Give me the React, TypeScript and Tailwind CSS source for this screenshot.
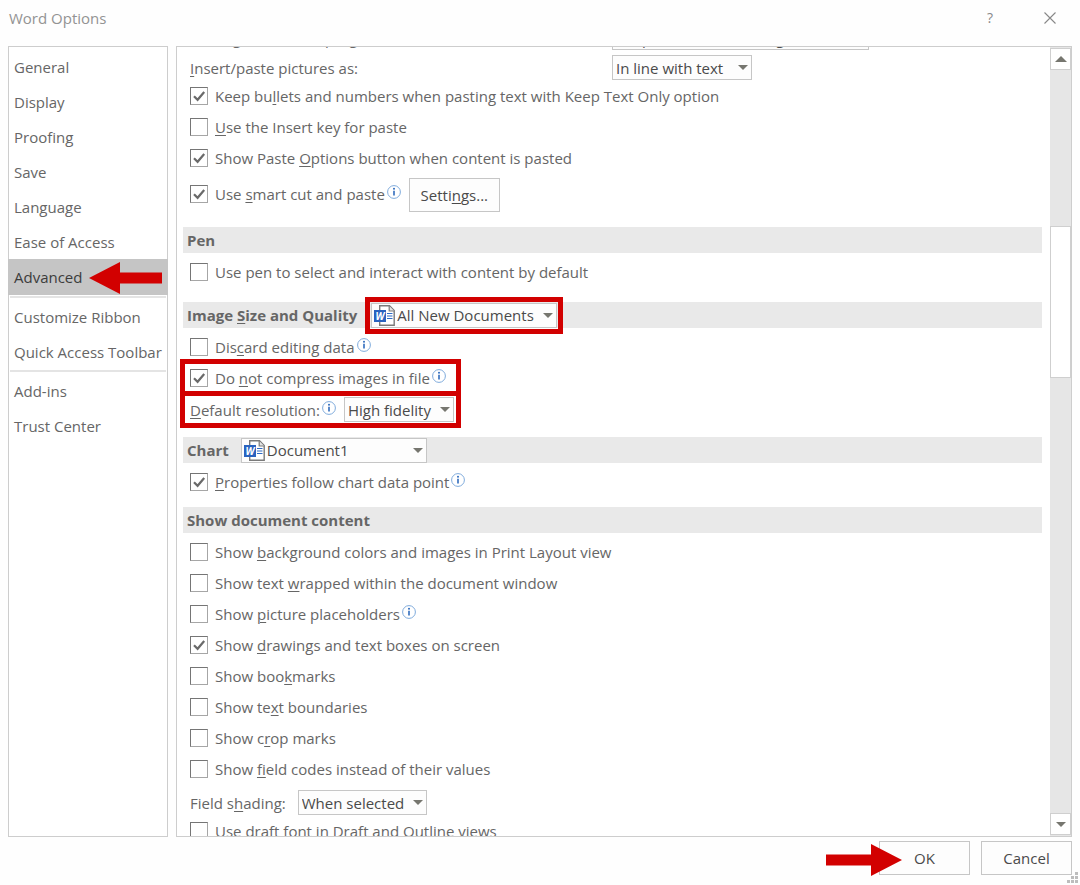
import { useState, type ReactNode } from "react";
import clsx from "clsx";

const navGroups = [
  ["General", "Display", "Proofing", "Save", "Language", "Ease of Access", "Advanced"],
  ["Customize Ribbon", "Quick Access Toolbar"],
  ["Add-ins", "Trust Center"],
];

// An underscore in front of a letter marks the access key
function Mnemonic({ text }: { text: string }) {
  const at = text.indexOf("_");
  if (at < 0) return <span>{text}</span>;
  return (
    <span>
      {text.slice(0, at)}
      <u className="underline decoration-1 underline-offset-2">{text[at + 1]}</u>
      {text.slice(at + 2)}
    </span>
  );
}

function InfoIcon() {
  return (
    <svg viewBox="0 0 14 14" className="w-3.5 h-3.5 ml-0.5 mb-1 shrink-0" aria-hidden="true">
      <circle cx="7" cy="7" r="6.4" fill="#fff" stroke="#7fabdc" strokeWidth="1" />
      <path d="M7 5.8v4.6" stroke="#2f6bbd" strokeWidth="1.6" />
      <circle cx="7" cy="3.8" r="1" fill="#2f6bbd" />
    </svg>
  );
}

function WordIcon() {
  return (
    <svg viewBox="0 0 21 21" className="w-[21px] h-[21px]" aria-hidden="true">
      <path d="M5.700 5V.8h9.8l4.7 4.7v14.7H5.700V17" fill="#fff" stroke="#7a7a7a" strokeWidth="1.4" />
      <path d="M15.200 1v5h5" fill="#e4e4e4" stroke="#7a7a7a" strokeWidth="1.2" />
      <path d="M13 8.500h5.500M13 11h5.500M13 13.500h5.500" stroke="#2f6bc4" strokeWidth="1.2" />
      <rect x="0" y="5" width="12" height="12" fill="#2a63bf" />
      <text x="6" y="14.6" textAnchor="middle" fontSize="10" fontWeight="700" fontStyle="italic" fill="#fff" fontFamily="Open Sans, sans-serif">
        W
      </text>
    </svg>
  );
}

function CheckOption({ label, checked = false, info = false }: { label: string; checked?: boolean; info?: boolean }) {
  return (
    <label className="flex items-center h-[31px] pl-[7px]">
      <span className="relative mr-[7px] flex">
        <input
          type="checkbox"
          defaultChecked={checked}
          className="peer appearance-none w-[18px] h-[18px] bg-white border border-[#a6a6a6] border-t-[#757575] border-l-[#757575]"
        />
        <svg viewBox="0 0 18 18" className="absolute inset-0 hidden peer-checked:block pointer-events-none" aria-hidden="true">
          <path d="M4 9.2l3.6 3.6L14.2 5" fill="none" stroke="#6a6a6a" strokeWidth="2.2" />
        </svg>
      </span>
      <Mnemonic text={label} />
      {info && <InfoIcon />}
    </label>
  );
}

interface DropDownProps {
  id: string;
  value: string;
  width: string;
  label?: string;
  word?: boolean;
}

function DropDown({ id, value, width, label, word }: DropDownProps) {
  return (
    <div className={clsx("relative shrink-0", width)}>
      <select
        id={id}
        aria-label={label}
        className={clsx(
          "block appearance-none w-full h-[25px] bg-[#fdfdfd] border border-[#c6c6c6] text-[#4a4a4a]",
          word ? "pl-[25px]" : "pl-[3px]"
        )}
      >
        <option>{value}</option>
      </select>
      {word && (
        <span className="absolute left-[3px] top-0.5 pointer-events-none">
          <WordIcon />
        </span>
      )}
      <svg viewBox="0 0 10 5" className="absolute right-1 top-2.5 w-2.5 h-[5px] pointer-events-none" aria-hidden="true">
        <path d="M0 0h10L5 5z" fill="#76766f" />
      </svg>
    </div>
  );
}

function SectionBar({ title, tight, children }: { title: string; tight?: boolean; children?: ReactNode }) {
  return (
    <div className={clsx("flex items-center h-[26px] pl-1 mb-[3px] bg-[#e9e9e9]", tight ? "mt-2.5" : "mt-[15px]")}>
      <h2 className="font-bold text-[#666]">
        <Mnemonic text={title} />
      </h2>
      {children}
    </div>
  );
}

function ScrollBar() {
  return (
    <div className="flex flex-col w-[21px] shrink-0 py-px bg-[#e6e6e6]">
      <button aria-label="Scroll up" className="h-[22px] flex items-center justify-center bg-white border border-[#cfcfcf]">
        <svg viewBox="0 0 12 6" className="w-3 h-1.5"><path d="M0 6h12L6 0z" fill="#76766f" /></svg>
      </button>
      <div className="flex-1">
        <div className="mt-[156px] h-[152px] bg-white border border-[#cfcfcf]" />
      </div>
      <button aria-label="Scroll down" className="h-[22px] flex items-center justify-center bg-white border border-[#cfcfcf]">
        <svg viewBox="0 0 10 5" className="w-2.5 h-[5px]"><path d="M0 0h10L5 5z" fill="#76766f" /></svg>
      </button>
    </div>
  );
}

export default function App() {
  const [active, setActive] = useState("Advanced");

  return (
    <div className="h-screen flex flex-col relative bg-[#fefefe] text-[#666] text-[15px] leading-5 font-['Open_Sans',sans-serif] overflow-hidden">
      {/* Title bar */}
      <header className="h-[46px] shrink-0 flex items-start pl-[9px]">
        <h1 className="flex-1 pt-2 text-[#939393]">Word Options</h1>
        <button aria-label="Help" className="w-15 h-9 text-sm text-[#888]">?</button>
        <button aria-label="Close" className="w-15 h-9 flex items-center justify-center">
          <svg viewBox="0 0 12 12" className="w-3 h-3">
            <path d="M.5 .5l11 11M11.5 .5l-11 11" stroke="#888" strokeWidth="1.1" />
          </svg>
        </button>
      </header>

      <div className="flex-1 min-h-0 flex gap-2 px-2">
        {/* Categories */}
        <nav className="w-40 shrink-0 border border-[#cdcdcd] bg-white pt-0.5">
          {navGroups.map((group, i) => (
            <div key={group[0]}>
              {i > 0 && <div className="h-0.5 my-px mx-px bg-[#e4e4e4]" />}
              {group.map((name) => (
                <button
                  key={name}
                  onClick={() => setActive(name)}
                  className={clsx(
                    "relative flex items-center text-left whitespace-nowrap",
                    name === active ? "h-9 w-40 -mx-px pl-1.5 bg-[#c5c5c5] text-[#3c3c3c]" : "h-[35px] w-full pl-[5px]"
                  )}
                >
                  {name}
                  {name === "Advanced" && (
                    <svg viewBox="0 0 73 32" className="absolute right-1.5 top-[3px] w-[73px] h-8" aria-hidden="true">
                      <path d="M0 16L31 0v10.500h42v11H31V32z" fill="#d20000" />
                    </svg>
                  )}
                </button>
              ))}
            </div>
          ))}
        </nav>

        {/* Options, scrolled part of the way down */}
        <main className="flex-1 min-w-0 flex border border-[#cdcdcd] bg-white">
          <div className="flex-1 min-w-0 overflow-hidden pl-1.5 mr-2">
            <div className="-mt-[22px] flex flex-col gap-[5px] pl-[7px]">
              <div className="flex items-center">
                <label htmlFor="paste-programs" className="w-[422px]">Pasting from other programs:</label>
                <DropDown id="paste-programs" value="Keep Source Formatting" width="w-[257px]" />
              </div>
              <div className="flex items-center">
                <label htmlFor="paste-pictures" className="w-[422px]"><Mnemonic text="_Insert/paste pictures as:" /></label>
                <DropDown id="paste-pictures" value="In line with text" width="w-[140px]" />
              </div>
            </div>
            <CheckOption label="Keep bu_llets and numbers when pasting text with Keep Text Only option" checked />
            <CheckOption label="_Use the Insert key for paste" />
            <CheckOption label="Show Paste _Options button when content is pasted" checked />
            <div className="flex items-start mt-[5px]">
              <CheckOption label="Use _smart cut and paste" checked info />
              <button className="ml-2 w-[91px] h-[34px] border border-[#c6c6c6] bg-[#fdfdfd] text-[#4a4a4a]">
                <Mnemonic text="Setti_ngs..." />
              </button>
            </div>

            <SectionBar title="Pen" />
            <CheckOption label="Use pen to select and interact with content by default" />

            <SectionBar title="Image _Size and Quality">
              <div className="relative ml-3.5">
                <DropDown id="image-scope" label="Image Size and Quality" value="All New Documents" width="w-[186px]" word />
                <div className="absolute -inset-1.5 border-[5px] border-[#d20000] pointer-events-none" />
              </div>
            </SectionBar>
            <CheckOption label="Dis_card editing data" info />
            <div className="relative w-[278px]">
              <CheckOption label="Do _not compress images in file" checked info />
              <div className="flex items-center mt-1 pl-[7px]">
                <label htmlFor="resolution" className="flex items-center">
                  <Mnemonic text="_Default resolution:" />
                  <InfoIcon />
                </label>
                <div className="ml-2">
                  <DropDown id="resolution" value="High fidelity" width="w-[110px]" />
                </div>
              </div>
              <div className="absolute -top-[3px] -bottom-1.5 -left-[3px] right-0 flex flex-col border-[5px] border-[#d20000] pointer-events-none">
                <div className="flex-1 border-b-[5px] border-[#d20000]" />
                <div className="flex-1" />
              </div>
            </div>

            <SectionBar title="Chart">
              <div className="ml-3">
                <DropDown id="chart-scope" label="Chart" value="Document1" width="w-[186px]" word />
              </div>
            </SectionBar>
            <CheckOption label="_Properties follow chart data point" checked info />

            <SectionBar title="Show document content" tight />
            <CheckOption label="Show _background colors and images in Print Layout view" />
            <CheckOption label="Show text _wrapped within the document window" />
            <CheckOption label="Show _picture placeholders" info />
            <CheckOption label="Show _drawings and text boxes on screen" checked />
            <CheckOption label="Show boo_kmarks" />
            <CheckOption label="Show te_xt boundaries" />
            <CheckOption label="Show c_rop marks" />
            <CheckOption label="Show _field codes instead of their values" />
            <div className="flex items-center gap-3 mt-1.5 pl-[7px]">
              <label htmlFor="field-shading"><Mnemonic text="Field s_hading:" /></label>
              <DropDown id="field-shading" value="When selected" width="w-[129px]" />
            </div>
            <CheckOption label="Use draft font in Draft and Outline views" />
          </div>
          <ScrollBar />
        </main>
      </div>

      {/* Dialog buttons */}
      <footer className="shrink-0 flex justify-end gap-[11px] px-2 pt-1 pb-2.5 text-[#4a4a4a]">
        <button className="relative w-[91px] h-[34px] border border-[#c6c6c6] bg-[#fdfdfd]">
          OK
          <svg viewBox="0 0 76 32" className="absolute -left-[54px] top-0.5 w-[76px] h-8" aria-hidden="true">
            <path d="M76 16L45 0v10.500H0v11h45V32z" fill="#d20000" />
          </svg>
        </button>
        <button className="w-[91px] h-[34px] border border-[#c6c6c6] bg-[#fdfdfd]">Cancel</button>
      </footer>
      <svg viewBox="0 0 11 11" className="absolute right-0.5 bottom-0.5 w-[11px] h-[11px]" aria-hidden="true">
        <path d="M8 0h3v3H8zM4 4h3v3H4zM8 4h3v3H8zM0 8h3v3H0zM4 8h3v3H4zM8 8h3v3H8z" fill="#bdbdbd" />
      </svg>
    </div>
  );
}
